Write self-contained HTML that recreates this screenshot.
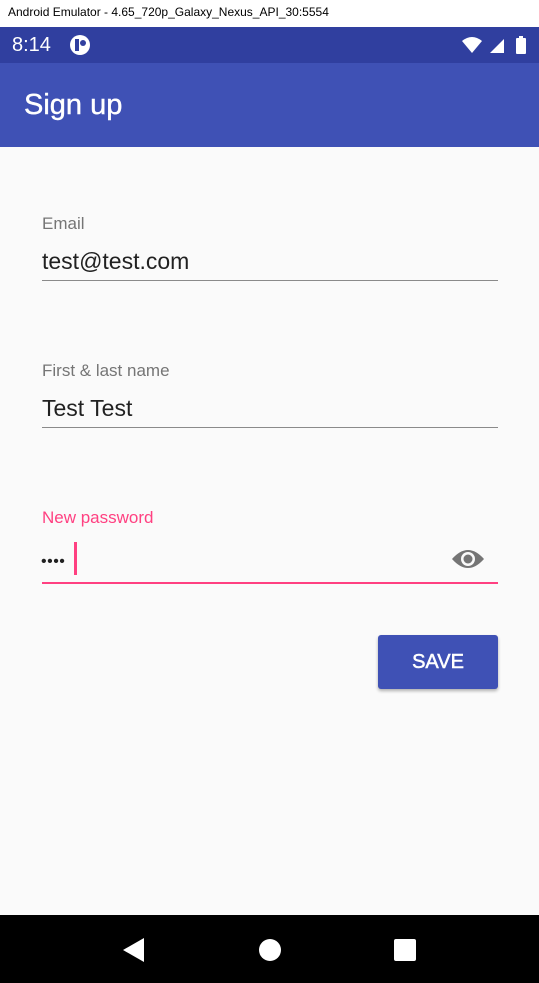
<!DOCTYPE html>
<html><head><meta charset="utf-8"><style>
*{margin:0;padding:0;box-sizing:border-box}
body{width:539px;height:983px;background:#fafafa;font-family:"Liberation Sans",sans-serif;position:relative;overflow:hidden}
.a{position:absolute}
.lbl{font-size:17px;color:#757575}
.val{font-size:23px;color:#212121}
.line{height:1px;background:#8a8a8a;left:42px;width:456px}
</style></head><body>
<div class="a" style="top:0;left:0;width:539px;height:27px;background:#fff"></div>
<div class="a" style="top:5px;left:8px;font-size:12px;color:#000">Android Emulator - 4.65_720p_Galaxy_Nexus_API_30:5554</div>
<div class="a" style="top:27px;left:0;width:539px;height:36px;background:#303f9f"></div>
<div class="a" style="top:34px;left:12px;font-size:20px;color:#fff">8:14</div>
<svg class="a" style="top:34px;left:69px" width="22" height="22" viewBox="0 0 22 22"><circle cx="11" cy="11" r="10" fill="#fff"/><rect x="6" y="5" width="4" height="12" fill="#303f9f"/><circle cx="14" cy="9" r="3" fill="#303f9f"/></svg>
<svg class="a" style="top:35px;left:460px" width="72" height="20" viewBox="0 0 72 20"><path d="M2 6 Q12 -2 22 6 L12 18 Z" fill="#fff"/><path d="M30 18 L30 18 L44 4 L44 18 Z" fill="#fff"/><rect x="56" y="3" width="10" height="16" rx="1" fill="#fff"/><rect x="59" y="1" width="4" height="3" fill="#fff"/></svg>
<div class="a" style="top:63px;left:0;width:539px;height:84px;background:#3f51b5"></div>
<div class="a" style="top:89px;left:24px;font-size:29px;color:#fff;-webkit-text-stroke:0.4px #fff">Sign up</div>

<div class="a lbl" style="top:214px;left:42px">Email</div>
<div class="a val" style="top:248px;left:42px">test@test.com</div>
<div class="a line" style="top:280px"></div>

<div class="a lbl" style="top:361px;left:42px">First &amp; last name</div>
<div class="a val" style="top:395px;left:42px">Test Test</div>
<div class="a line" style="top:427px"></div>

<div class="a lbl" style="top:508px;left:42px;color:#ff4081">New password</div>
<div class="a" style="top:553px;left:41px;font-size:16px;color:#212121;letter-spacing:0.5px">••••</div>
<div class="a" style="top:542px;left:74px;width:3px;height:33px;background:#ff4081"></div>
<svg class="a" style="top:546px;left:451px" width="34" height="26" viewBox="0 0 34 26"><path d="M1 13 Q17 -5 33 13 Q17 31 1 13 Z" fill="#757575"/><circle cx="17" cy="13" r="7" fill="#fafafa"/><circle cx="17" cy="13" r="4.5" fill="#757575"/></svg>
<div class="a" style="top:582px;left:42px;width:456px;height:2px;background:#ff4081"></div>

<div class="a" style="top:635px;left:378px;width:120px;height:54px;background:#3f51b5;border-radius:3px;box-shadow:0 2px 3px rgba(0,0,0,.3);color:#fff;font-size:20px;-webkit-text-stroke:0.5px #fff;display:flex;align-items:center;justify-content:center">SAVE</div>

<div class="a" style="top:915px;left:0;width:539px;height:68px;background:#000"></div>
<svg class="a" style="top:936px;left:120px" width="300" height="28" viewBox="0 0 300 28"><path d="M3 14 L24 2 L24 26 Z" fill="#fff"/><circle cx="150" cy="14" r="11" fill="#fff"/><rect x="274" y="3" width="22" height="22" rx="2" fill="#fff"/></svg>
</body></html>
